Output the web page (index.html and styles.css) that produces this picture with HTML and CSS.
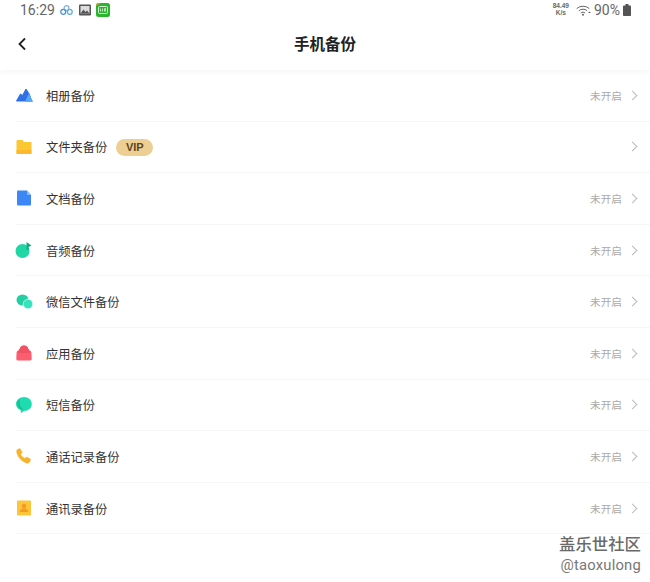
FILE: index.html
```html
<!DOCTYPE html>
<html lang="zh">
<head>
<meta charset="utf-8">
<title>手机备份</title>
<link rel="stylesheet" href="styles.css">
</head>
<body>
<div class="page">
  <header class="top">
    <div class="status">
      <span class="time">16:29</span>
      <svg class="s-ic" width="15" height="12" viewBox="0 0 16 12"><g fill="none" stroke-width="1.3"><circle cx="8" cy="4" r="2.6" stroke="#7fb2e0"/><circle cx="4.5" cy="8" r="2.6" stroke="#4a8fd0"/><circle cx="11.5" cy="8" r="2.6" stroke="#5ab0c8"/></g></svg>
      <svg class="s-ic" width="12" height="12" viewBox="0 0 12 12"><rect width="12" height="11" y=".5" rx="1" fill="#555"/><rect x="1.5" y="2" width="9" height="7.5" fill="#ddd"/><path d="M1.5 9.5l3-4 2 2.500 1.500-1.500 2.500 3z" fill="#555"/></svg>
      <svg class="s-ic" width="14" height="14" viewBox="0 0 14 14"><rect width="14" height="14" rx="2.500" fill="#2bb52f"/><path d="M0 3Q0 0 3 0h2z" fill="#e8903a"/><rect x="2.500" y="3.500" width="9" height="7" rx="1" fill="none" stroke="#d8f5d8"/><path d="M4.500 5.500v3M6.500 5.500v3M8.500 8.500v-3h1v3" stroke="#d8f5d8" stroke-width=".8" fill="none"/></svg>
      <span class="spacer"></span>
      <span class="speed">84.49<br>K/s</span>
      <svg class="wifi" width="15" height="11" viewBox="0 0 15 11"><g fill="none" stroke="#666" stroke-width="1"><path d="M.7 3.600a9.500 9.500 0 0 1 12.600 0"/><path d="M2.800 5.800a6.300 6.300 0 0 1 8.400 0"/><path d="M4.800 8a3.300 3.300 0 0 1 4.400 0"/></g><circle cx="7" cy="9.800" r="1" fill="#666"/><path d="M12 8l1.500-1.500L15 8z" fill="#666"/></svg>
      <span class="pct">90%</span>
      <svg class="batt" width="8" height="12" viewBox="0 0 8 12"><rect x="2.500" width="3" height="2" fill="#555"/><rect y="1.500" width="8" height="10.500" rx=".8" fill="#555"/></svg>
    </div>
    <div class="nav">
      <svg class="back" width="10" height="14" viewBox="0 0 10 14"><path d="M8 1.500L2.500 7 8 12.500" fill="none" stroke="#222" stroke-width="1.800"/></svg>
      <h1 class="title">手机备份</h1>
    </div>
  </header>
  <ul class="list">
    <li class="row">
      <svg class="ic" width="18" height="18" viewBox="0 0 18 18"><path d="M1.500 15L5.500 8l2 1.500L11 3l3.500 5.500L16.500 15z" fill="#2f6fe8" stroke="#2f6fe8" stroke-linejoin="round"/><path d="M10.500 15.500l3.300-7 3.700 7z" fill="#55aaf5" stroke="#55aaf5" stroke-linejoin="round"/></svg>
      <span class="label">相册备份</span><span class="state">未开启</span><span class="chev"></span>
    </li>
    <li class="row">
      <svg class="ic" width="18" height="18" viewBox="0 0 18 18"><path d="M2.500 2h5L9 4h6.500a1 1 0 0 1 1 1v10a1 1 0 0 1-1 1h-13a1 1 0 0 1-1-1V3a1 1 0 0 1 1-1z" fill="#fbc833"/><path d="M1.500 12h15v3a1 1 0 0 1-1 1h-13a1 1 0 0 1-1-1z" fill="#fdb92e"/></svg>
      <span class="label">文件夹备份</span><span class="vip">VIP</span><span class="state"></span><span class="chev"></span>
    </li>
    <li class="row">
      <svg class="ic" width="18" height="18" viewBox="0 0 18 18"><path d="M3 1.500h9l4 4.500v9.500a1 1 0 0 1-1 1H3a1 1 0 0 1-1-1v-13a1 1 0 0 1 1-1z" fill="#3d86f5"/><path d="M12 1.500l4 4.500h-4z" fill="#8bbcf9"/></svg>
      <span class="label">文档备份</span><span class="state">未开启</span><span class="chev"></span>
    </li>
    <li class="row">
      <svg class="ic" width="18" height="18" viewBox="0 0 18 18"><circle cx="7.500" cy="10" r="7" fill="#20d6a5"/><path d="M11.500 8.500V1l5 3.500-3 1.500v3z" fill="#17a884"/></svg>
      <span class="label">音频备份</span><span class="state">未开启</span><span class="chev"></span>
    </li>
    <li class="row">
      <svg class="ic" width="18" height="18" viewBox="0 0 18 18"><ellipse cx="7.500" cy="7" rx="6" ry="5.500" fill="#23cfa2"/><circle cx="13" cy="11" r="4.800" fill="#37e3bd" stroke="#fff" stroke-width=".6"/></svg>
      <span class="label">微信文件备份</span><span class="state">未开启</span><span class="chev"></span>
    </li>
    <li class="row">
      <svg class="ic" width="18" height="18" viewBox="0 0 18 18"><path d="M6 2.500Q9 .5 12 2.500L14 6c1.500.5 2.300 1.300 2.400 2.500l.3 6.300a1.500 1.500 0 0 1-1.500 1.700H2.800a1.500 1.500 0 0 1-1.500-1.700l.3-6.300C1.700 7.300 2.500 6.500 4 6z" fill="#fb5f6f"/><path d="M6 2.500Q9 .5 12 2.500L14 6 14.500 9h-11L4 6z" fill="#ef5262"/></svg>
      <span class="label">应用备份</span><span class="state">未开启</span><span class="chev"></span>
    </li>
    <li class="row">
      <svg class="ic" width="18" height="18" viewBox="0 0 18 18"><path d="M9 1c4.400 0 7.800 3 7.800 7s-3.400 7-7.800 7l-3.200 2.300V14.300C3 13 1 10.800 1 8c0-4 3.600-7 8-7z" fill="#1fdcb0"/><path d="M5 3c-2 1-3 3-3 5 0 2.500 2 4.500 4 5.500l3 .5c-3-2-5-6-4-11z" fill="#15c296"/></svg>
      <span class="label">短信备份</span><span class="state">未开启</span><span class="chev"></span>
    </li>
    <li class="row">
      <svg class="ic" width="18" height="18" viewBox="0 0 18 18"><path d="M2 2.800L5 1.500l2.300 4-1.800 1.500c.8 2 2.300 3.500 4.500 4.600l1.600-1.700 4 2.400-1 2.700c-.5 1-2 1.400-3 1C7 14.500 3 10.500 1.800 5.500c-.2-1 0-2 .2-2.700z" fill="#f5b32c" stroke="#f5b32c" stroke-width=".6" stroke-linejoin="round"/></svg>
      <span class="label">通话记录备份</span><span class="state">未开启</span><span class="chev"></span>
    </li>
    <li class="row">
      <svg class="ic" width="18" height="18" viewBox="0 0 18 18"><rect x="2" y="1.500" width="14" height="15" rx="1" fill="#fcc53a"/><circle cx="9" cy="7" r="2.300" fill="#f59a25"/><path d="M4.500 13c.5-2.500 2.500-3.500 4.500-3.500s4 1 4.500 3.500z" fill="#f59a25"/></svg>
      <span class="label">通讯录备份</span><span class="state">未开启</span><span class="chev"></span>
    </li>
  </ul>
  <div class="mark">
    <div class="mark-title">盖乐世社区</div>
    <div class="mark-user">@taoxulong</div>
  </div>
</div>
</body>
</html>
```
FILE: styles.css
```css
* { box-sizing: border-box; }
html, body { margin: 0; padding: 0; }
body {
  width: 650px;
  height: 582px;
  overflow: hidden;
  background: #fff;
  font-family: "Noto Sans CJK SC", "Liberation Sans", sans-serif;
}
.page { position: relative; height: 582px; }
.top {
  height: 70px;
  box-shadow: 0 1px 6px rgba(0, 0, 0, 0.05);
  position: relative;
}
.status {
  height: 20px;
  padding: 0 19px 0 20px;
  display: flex;
  align-items: center;
  color: #666;
}
.time {
  font: 14px/20px Roboto, sans-serif;
  margin-right: 4px;
}
.s-ic { margin-right: 5px; flex: none; }
.spacer { flex: 1; }
.speed {
  font: bold 6.500px/6.500px "Liberation Sans", sans-serif;
  text-align: center;
  color: #666;
  margin-right: 7px;
  margin-top: -1px;
}
.wifi { margin-right: 3px; }
.pct { font: 14px/20px Roboto, sans-serif; margin-right: 3px; }
.nav {
  height: 50px;
  position: relative;
  display: flex;
  align-items: center;
  justify-content: center;
}
.back { position: absolute; left: 17px; top: 17px; }
.title {
  margin: -4px 0 0;
  font-size: 15.500px;
  font-weight: 700;
  color: #222;
}
.list { list-style: none; margin: 0; padding: 0 0 0 16px; }
.row {
  height: 51.600px;
  display: flex;
  align-items: center;
  border-bottom: 1px solid #f6f6f6;
  padding-right: 12px;
}
.ic { flex: none; margin-right: 13px; margin-left: -1px; }
.label { font-size: 12.250px; color: #333; margin-top: 1px; }
.vip {
  margin-left: 9px;
  width: 37px;
  height: 17px;
  border-radius: 9px;
  background: #edcf94;
  color: #5c4520;
  font: bold 11px/17px "Liberation Sans", sans-serif;
  text-align: center;
  margin-top: 2px;
}
.state { margin-left: auto; font-size: 10.670px; color: #aaa; }
.chev {
  width: 7px;
  height: 7px;
  margin: 0 2px 0 7px;
  border-top: 1px solid #bbb;
  border-right: 1px solid #bbb;
  transform: rotate(45deg);
}
.mark {
  position: absolute;
  right: 9px;
  bottom: 8px;
  text-align: right;
}
.mark-title { font-size: 16.400px; line-height: 20px; font-weight: 500; color: #6a6a6a; margin-bottom: 3px; }
.mark-user { font: 14.800px/18px Roboto, sans-serif; letter-spacing: 0.2px; color: #777; }
```
